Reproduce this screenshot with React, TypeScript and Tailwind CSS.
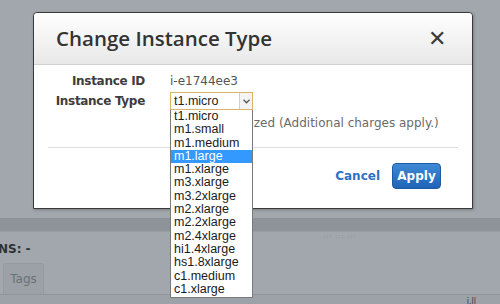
import React from "react";

const types = [
  "t1.micro",
  "m1.small",
  "m1.medium",
  "m1.large",
  "m1.xlarge",
  "m3.xlarge",
  "m3.2xlarge",
  "m2.xlarge",
  "m2.2xlarge",
  "m2.4xlarge",
  "hi1.4xlarge",
  "hs1.8xlarge",
  "c1.medium",
  "c1.xlarge",
];

export default function App() {
  return (
    <div
      className="relative w-[500px] h-[304px] overflow-hidden bg-[#a1a7ad]"
      style={{ fontFamily: "'DejaVu Sans', Verdana, sans-serif" }}
    >
      {/* dimmed background page */}
      <div className="flex flex-col pt-[218px]">
        <div className="h-[14px] bg-[#8d9399] border-b border-[#979da3]" />
        <div className="flex justify-center pl-[180px] h-[8px] items-center gap-[3px]">
          <span className="text-[6px] leading-none text-[#868c92] tracking-[1px]">:::</span>
          <span className="text-[6px] leading-none text-[#868c92] tracking-[1px]">:::</span>
          <span className="text-[6px] leading-none text-[#868c92] tracking-[1px]">:::</span>
        </div>
        <div className="h-[18px] flex items-center">
          <span className="text-[12px] font-bold text-[#2e3134] -ml-[12px]">DNS: -</span>
        </div>
        <div className="flex h-[37px] items-end border-b border-[#8f959b]">
          <div className="ml-[3px] w-[41px] h-[31px] rounded-t-[3px] border border-b-0 border-[#959ba1] bg-[#9ba1a7] flex items-center justify-center text-[12px] text-[#6b7075]">
            Tags
          </div>
        </div>
        <div className="h-[9px] bg-[#9ca2a8] flex justify-end pr-[24px] overflow-hidden">
          <span className="text-[8px] leading-none text-[#3a3d40] mt-[3px]">i.ll</span>
        </div>
      </div>

      {/* modal */}
      <div className="absolute left-[33px] top-[12px] w-[440px] h-[197px] bg-white border border-[#3a3a3a] rounded-t-[4px] shadow-[1px_1px_3px_rgba(0,0,0,0.25)] flex flex-col">
        <div className="h-[52px] shrink-0 flex items-center justify-between pl-[22px] pr-[26px] rounded-t-[4px] bg-gradient-to-b from-[#ffffff] to-[#e8e8e8] border-b border-[#d2d2d2]">
          <span
            className="text-[20.5px] font-semibold text-[#333333]"
            style={{ fontFamily: "'Open Sans', sans-serif" }}
          >
            Change Instance Type
          </span>
          <span className="text-[22px] leading-none text-[#3a3a3a]" style={{ fontFamily: "'Liberation Sans', sans-serif" }}>
            ✕
          </span>
        </div>

        <div className="flex flex-col pt-[5px]">
          <div className="flex items-center h-[21px]">
            <div className="w-[111px] text-right text-[12px] font-bold text-[#3d3d3d] tracking-[-0.3px]">Instance ID</div>
            <div className="ml-[25px] text-[12px] text-[#555555]">i-e1744ee3</div>
          </div>
          <div className="flex items-center h-[20px]">
            <div className="w-[111px] text-right text-[12px] font-bold text-[#3d3d3d] tracking-[-0.3px]">Instance Type</div>
            <div
              className="ml-[25px] w-[83px] h-[18px] border border-[#d8b36a] flex items-stretch bg-white"
              style={{ fontFamily: "'Liberation Sans', Arial, sans-serif" }}
            >
              <span className="flex-1 pl-[3px] text-[12.5px] leading-[16px] text-[#222]">t1.micro</span>
              <span className="w-[13px] border-l border-[#cfcfcf] bg-[#f3f3f3] flex items-center justify-center">
                <svg width="7" height="5" viewBox="0 0 7 5">
                  <path d="M0.5 0.8 L3.5 3.8 L6.5 0.8" stroke="#555" strokeWidth="1.3" fill="none" />
                </svg>
              </span>
            </div>
          </div>
          <div className="flex items-center h-[20px] mt-[2px]">
            <div className="ml-[136px] w-[12px] h-[12px] border border-[#999] rounded-[2px] bg-white" />
            <span className="ml-[6px] text-[12px] text-[#6a6a6a]">EBS-optimized (Additional charges apply.)</span>
          </div>
          <div className="mx-[14px] mt-[14px] h-px bg-[#dddddd]" />
          <div className="flex items-center justify-end gap-[12px] pr-[31px] pt-[15px]">
            <span className="text-[12px] font-bold text-[#2d72c4]">Cancel</span>
            <span className="h-[26px] w-[49px] rounded-[4px] border border-[#1d5aa3] bg-gradient-to-b from-[#3e8ad6] to-[#1f63b6] text-white text-[12px] font-bold flex items-center justify-center">
              Apply
            </span>
          </div>
        </div>
      </div>

      {/* open dropdown list */}
      <div
        className="absolute left-[170px] top-[110px] w-[83px] bg-white border border-[#7a7a7a] border-t-0 flex flex-col pb-[1px]"
        style={{ fontFamily: "'Liberation Sans', Arial, sans-serif" }}
      >
        {types.map((t) => (
          <div
            key={t}
            className={
              t === "m1.large"
                ? "h-[13.3px] leading-[13.3px] pl-[3px] text-[12.5px] bg-[#3399ff] text-white"
                : "h-[13.3px] leading-[13.3px] pl-[3px] text-[12.5px] text-[#1a1a1a]"
            }
          >
            {t}
          </div>
        ))}
      </div>
    </div>
  );
}
